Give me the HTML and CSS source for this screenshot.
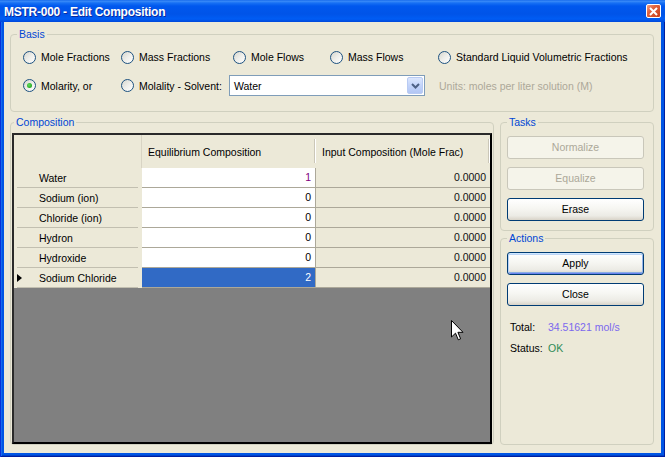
FILE: index.html
```html
<!DOCTYPE html>
<html>
<head>
<meta charset="utf-8">
<title>MSTR-000 - Edit Composition</title>
<link rel="stylesheet" href="styles.css">
</head>
<body>
<div class="window">
  <div class="titlebar">
    <span class="title">MSTR-000 - Edit Composition</span>
    <span class="close"><svg width="9" height="9" viewBox="0 0 9 9"><path d="M1 1L8 8M8 1L1 8" stroke="#fff" stroke-width="2"/></svg></span>
  </div>
  <div class="client">
    <fieldset class="group basis">
      <legend>Basis</legend>
      <div class="basis-body">
        <div class="opts1">
          <label class="opt"><span class="radio"></span>Mole Fractions</label>
          <label class="opt"><span class="radio"></span>Mass Fractions</label>
          <label class="opt"><span class="radio"></span>Mole Flows</label>
          <label class="opt"><span class="radio"></span>Mass Flows</label>
          <label class="opt"><span class="radio"></span>Standard Liquid Volumetric Fractions</label>
        </div>
        <div class="opts2">
          <label class="opt o-molarity"><span class="radio checked"></span>Molarity, or</label>
          <label class="opt o-molality"><span class="radio"></span>Molality - Solvent:</label>
          <div class="combo">
            <span class="combo-text">Water</span>
            <span class="combo-btn"><svg width="9" height="6" viewBox="0 0 9 6"><path d="M1 1L4.5 4.5L8 1" fill="none" stroke="#4D6185" stroke-width="2"/></svg></span>
          </div>
          <span class="units">Units: moles per liter solution (M)</span>
        </div>
      </div>
    </fieldset>

    <div class="main">
      <fieldset class="group composition">
        <legend>Composition</legend>
        <div class="comp-body">
          <div class="grid">
            <div class="gtable">
              <div class="hcorner"></div>
              <div class="hcell">Equilibrium Composition</div>
              <div class="hcell">Input Composition (Mole Frac)</div>

              <div class="rh">Water</div>
              <div class="eq purple">1</div>
              <div class="in">0.0000</div>

              <div class="rh">Sodium (ion)</div>
              <div class="eq">0</div>
              <div class="in">0.0000</div>

              <div class="rh">Chloride (ion)</div>
              <div class="eq">0</div>
              <div class="in">0.0000</div>

              <div class="rh">Hydron</div>
              <div class="eq">0</div>
              <div class="in">0.0000</div>

              <div class="rh">Hydroxide</div>
              <div class="eq">0</div>
              <div class="in">0.0000</div>

              <div class="rh"><span class="cur"></span>Sodium Chloride</div>
              <div class="eq sel">2</div>
              <div class="in">0.0000</div>
            </div>
          </div>
        </div>
      </fieldset>

      <div class="side">
        <fieldset class="group tasks">
          <legend>Tasks</legend>
          <div class="btns">
            <div class="btn disabled">Normalize</div>
            <div class="btn disabled">Equalize</div>
            <div class="btn">Erase</div>
          </div>
        </fieldset>
        <fieldset class="group actions">
          <legend>Actions</legend>
          <div class="btns">
            <div class="btn default">Apply</div>
            <div class="btn">Close</div>
          </div>
          <div class="info first"><span class="lbl">Total:</span><span class="total">34.51621 mol/s</span></div>
          <div class="info"><span class="lbl">Status:</span><span class="ok">OK</span></div>
        </fieldset>
      </div>
    </div>
  </div>
  <svg class="cursor" width="13" height="21" viewBox="0 0 13 21"><path d="M0.5 0.5L0.5 17L4.5 13.2L7.3 19.8L9.6 18.8L6.9 12.3L12 12.3Z" fill="#fff" stroke="#000" stroke-width="1" stroke-linejoin="miter"/></svg>
</div>
</body>
</html>
```

FILE: styles.css
```css
html, body {
  margin: 0;
  padding: 0;
  background: #ECE9D8;
}

body {
  font-family: "Liberation Sans", Arial, sans-serif;
  font-size: 10.5px;
  color: #000;
}

.window {
  position: relative;
  width: 665px;
  height: 457px;
  box-sizing: border-box;
  padding: 0 4px 4px;
  display: flex;
  flex-direction: column;
  background: #0055E5;
  box-shadow: inset 1px 0 0 #0831D9, inset -1px 0 0 #001EA0, inset 0 -1px 0 #001EA0, inset 2px 0 0 #166AEE, inset 0 -2px 0 #0042C8;
  overflow: hidden;
}

/* title bar */
.titlebar {
  height: 22px;
  margin: 0 -4px;
  display: flex;
  align-items: center;
  justify-content: space-between;
  background: linear-gradient(to bottom, #0A5FE8 0px, #3D8DF8 1px, #1770F4 3px, #0058EE 6px, #0054E8 14px, #005CF4 19px, #0048DA 22px);
}

.title {
  padding-left: 4px;
  padding-top: 1px;
  color: #fff;
  font-weight: bold;
  font-size: 12px;
  letter-spacing: -0.25px;
  text-shadow: 1px 1px 0 #0A2A9E;
}

.close {
  width: 15px;
  height: 14px;
  margin-right: 4px;
  box-sizing: border-box;
  border: 1px solid #fff;
  border-radius: 2px;
  background: linear-gradient(135deg, #F0A088 0%, #E06440 35%, #C83E18 100%);
  display: flex;
  align-items: center;
  justify-content: center;
}

/* client */
.client {
  flex: 1;
  background: #ECE9D8;
  padding: 6px 7px 8px 6px;
  display: flex;
  flex-direction: column;
}

fieldset.group {
  margin: 0;
  padding: 0;
  min-width: 0;
  border: 1px solid #D0D0BF;
  border-radius: 4px;
  box-sizing: border-box;
}

fieldset.group legend {
  margin-left: 6px;
  padding: 0 2px;
  line-height: 12px;
  color: #0046D5;
}

fieldset.composition legend {
  margin-left: 3px;
}

/* basis */
.basis-body {
  padding: 9px 0 15px 12px;
}

.opts1 {
  display: grid;
  grid-template-columns: 98px 112px 97px 108px auto;
  height: 16px;
  align-items: center;
}

.opts2 {
  display: flex;
  align-items: center;
  height: 21px;
  margin-top: 10px;
}

.opt {
  display: flex;
  align-items: center;
  white-space: nowrap;
}

.o-molarity { width: 98px; }
.o-molality { width: 108px; }

.radio {
  flex: none;
  width: 13px;
  height: 13px;
  box-sizing: border-box;
  margin-right: 5px;
  border: 1px solid #1C5180;
  border-radius: 50%;
  background: linear-gradient(135deg, #D6D6CE 0%, #EEEEEA 50%, #FFFFFF 100%);
  display: flex;
  align-items: center;
  justify-content: center;
}

.radio.checked::after {
  content: "";
  width: 5px;
  height: 5px;
  border-radius: 50%;
  background: radial-gradient(circle at 40% 40%, #62DE5E 0%, #2FB02B 60%, #1F941D 100%);
}

.combo {
  width: 196px;
  height: 21px;
  box-sizing: border-box;
  padding: 1px;
  border: 1px solid #7F9DB9;
  background: #fff;
  display: flex;
  align-items: center;
  justify-content: space-between;
}

.combo-text {
  padding-left: 3px;
}

.combo-btn {
  width: 16px;
  height: 17px;
  box-sizing: border-box;
  border: 1px solid #B9CBF3;
  border-radius: 2px;
  background: linear-gradient(to bottom, #DCE7FD 0%, #C3D4FA 50%, #B2C6F4 100%);
  display: flex;
  align-items: center;
  justify-content: center;
}

.units {
  margin-left: 14px;
  color: #ACA899;
  white-space: nowrap;
}

/* main area */
.main {
  margin-top: 4px;
  height: 329px;
  display: flex;
  gap: 6px;
}

.composition {
  width: 484px;
  height: 329px;
}

.comp-body {
  padding: 5px 1px 0 1px;
}

.grid {
  height: 311px;
  box-sizing: border-box;
  border: 2px solid #000;
  border-top-color: #2A2A2A;
  border-left-color: #2A2A2A;
  background: #808080;
}

.gtable {
  display: grid;
  grid-template-columns: 128px 174px 174px;
  grid-template-rows: 33px repeat(6, 20px);
  align-content: start;
}

.hcorner {
  background: #ECE9D8;
  border-right: 1px solid #D8D4C4;
  box-sizing: border-box;
}

.hcell {
  position: relative;
  background: #ECE9D8;
  padding-left: 6px;
  display: flex;
  align-items: center;
  white-space: nowrap;
}

.hcell::after {
  content: "";
  position: absolute;
  right: 1px;
  top: 4px;
  bottom: 5px;
  width: 1px;
  background: #CBC7B8;
  box-shadow: 1px 0 0 #fff;
}

.rh {
  position: relative;
  background: #ECE9D8;
  padding-left: 25px;
  display: flex;
  align-items: center;
  white-space: nowrap;
}

.rh::after {
  content: "";
  position: absolute;
  left: 3px;
  right: 4px;
  bottom: 0;
  height: 1px;
  background: #C2BFB0;
}

.cur {
  width: 0;
  height: 0;
  margin-left: -22px;
  margin-right: 17px;
  border-left: 5px solid #000;
  border-top: 4px solid transparent;
  border-bottom: 4px solid transparent;
}

.eq, .in {
  box-sizing: border-box;
  text-align: right;
  padding-right: 4px;
  line-height: 19px;
  border-bottom: 1px solid #ACA899;
}

.eq {
  background: #fff;
  border-right: 1px solid #ACA899;
}

.eq.purple { color: #800080; }

.eq.sel {
  background: #316AC5;
  color: #fff;
}

.in {
  background: #ECE9D8;
  color: #111;
}

/* side */
.side {
  width: 154px;
  display: flex;
  flex-direction: column;
  gap: 1px;
}

.tasks {
  height: 115px;
}

.actions {
  flex: 1;
}

.btns {
  padding: 8px 9px 0 6px;
  display: flex;
  flex-direction: column;
  gap: 8px;
}

.btn {
  height: 23px;
  box-sizing: border-box;
  border: 1px solid #003C74;
  border-radius: 3px;
  background: linear-gradient(to bottom, #FFFFFF 0%, #F6F6F2 45%, #ECEBE5 80%, #D8D3C8 100%);
  text-align: center;
  line-height: 21px;
}

.btn.disabled {
  border-color: #C9C7BA;
  background: #F5F4EA;
  color: #ACA899;
}

.btn.default {
  box-shadow: inset 0 1px 0 #CEE7FF, inset 1px 0 0 #B8D2F8, inset -1px 0 0 #94B4EA, inset 0 -1px 0 #6982EE, inset 0 2px 0 #BCD4F6, inset 0 -2px 0 #89ADE4;
}

.info {
  display: flex;
  line-height: 14px;
  padding-left: 9px;
  margin-top: 7px;
}

.info.first {
  margin-top: 14px;
}

.lbl {
  width: 38px;
}

.total { color: #7B68EE; }
.ok { color: #2E8B57; }

.cursor {
  position: absolute;
  left: 451px;
  top: 320px;
}
```
